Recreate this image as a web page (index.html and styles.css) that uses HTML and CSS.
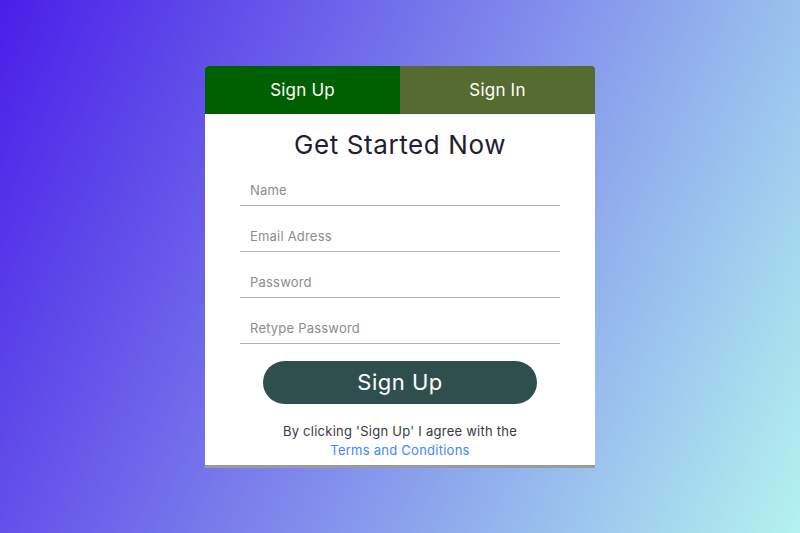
FILE: index.html
```html
<!DOCTYPE html>
<html lang="en">
<head>
<meta charset="utf-8">
<title>Sign Up</title>
<link rel="stylesheet" href="styles.css">
</head>
<body>
  <div class="card">
    <div class="tabs">
      <div class="tab tab-active">Sign Up</div>
      <div class="tab tab-other">Sign In</div>
    </div>
    <div class="content">
      <h1 class="title">Get Started Now</h1>
      <form class="form">
        <input class="field" type="text" placeholder="Name">
        <input class="field" type="email" placeholder="Email Adress">
        <input class="field" type="password" placeholder="Password">
        <input class="field" type="password" placeholder="Retype Password">
        <button class="btn" type="button">Sign Up</button>
      </form>
      <p class="terms">By clicking 'Sign Up' I agree with the<br><a class="link" href="#">Terms and Conditions</a></p>
    </div>
  </div>
</body>
</html>
```
FILE: styles.css
```css
* { box-sizing: border-box; }
html, body { margin: 0; padding: 0; }
body {
  height: 100vh;
  display: flex;
  align-items: center;
  justify-content: center;
  background: linear-gradient(115deg, #4a1ee8 0%, #b3f3ef 100%);
  font-family: Inter, "Open Sans", sans-serif;
}
.card {
  width: 390px;
  background: #fff;
  border-radius: 3px 3px 0 0;
  overflow: hidden;
  border-bottom: 3px solid #9a9a9a;
}
.tabs {
  display: grid;
  grid-template-columns: 1fr 1fr;
  height: 48px;
}
.tab {
  display: flex;
  align-items: center;
  justify-content: center;
  color: #fff;
  font-size: 17px;
  letter-spacing: 0.2px;
}
.tab-active { background: #006000; }
.tab-other { background: #556b2f; }
.content {
  padding: 15px 0 5px;
  display: flex;
  flex-direction: column;
  align-items: center;
}
.title {
  margin: 0;
  font-size: 26px;
  line-height: 32px;
  font-weight: 400;
  color: #1d2030;
  letter-spacing: 0.6px;
}
.form {
  width: 320px;
  display: flex;
  flex-direction: column;
  align-items: center;
}
.field {
  width: 100%;
  height: 30px;
  margin-top: 16px;
  border: none;
  border-bottom: 1px solid #b0b0b0;
  padding: 0 10px;
  font-family: inherit;
  font-size: 13px;
  letter-spacing: 0.2px;
  color: #333;
  outline: none;
  background: transparent;
}
.field:first-child { margin-top: 15px; }
.field::placeholder { color: #8c8c8c; }
.btn {
  margin-top: 17px;
  width: 274px;
  height: 43px;
  border: none;
  border-radius: 22px;
  background: #2f4f4f;
  color: #fff;
  font-family: inherit;
  font-size: 22px;
  letter-spacing: 0.5px;
}
.terms {
  margin: 18px 0 0;
  text-align: center;
  font-size: 13px;
  line-height: 19px;
  letter-spacing: 0.25px;
  color: #3a3a3a;
}
.link {
  color: #4088f5;
  text-decoration: none;
}
```
